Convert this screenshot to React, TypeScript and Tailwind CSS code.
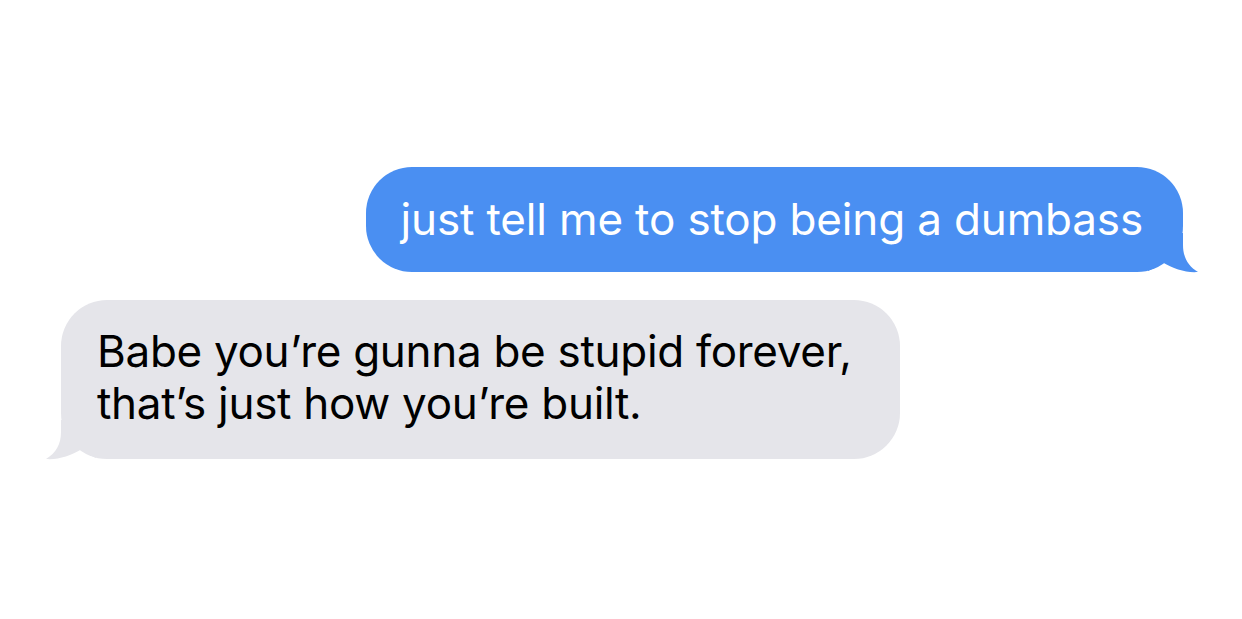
const font = "font-['Inter','Liberation_Sans',sans-serif]";

// iMessage-style tail, drawn for the right side; mirrored for received bubbles
function Tail({ color, flip }: { color: string; flip?: boolean }) {
  return (
    <svg
      width="50"
      height="40"
      viewBox="0 0 50 40"
      className={`absolute bottom-[-1px] ${flip ? "left-[-15px] -scale-x-100" : "right-[-15px]"}`}
    >
      <path
        d="M0 0 H35 V12 C35 24 40 33 50 39 C38 40 26 36 14 29 C9 33 5 36 0 38 Z"
        fill={color}
      />
    </svg>
  );
}

export default function App() {
  return (
    <div className={`flex h-[619px] w-[1242px] flex-col gap-[28px] bg-white pt-[167px] ${font}`}>
      {/* sent */}
      <div className="flex justify-end pr-[59px]">
        <div className="relative rounded-[46px] bg-[#4a8ff2] pt-[26px] pb-[27px] pl-[35px] pr-[40px]">
          <p className="whitespace-nowrap text-[44px] leading-[52px] tracking-[-0.15px] text-white">
            just tell me to stop being a dumbass
          </p>
          <Tail color="#4a8ff2" />
        </div>
      </div>

      {/* received */}
      <div className="flex justify-start pl-[61px]">
        <div className="relative rounded-[46px] bg-[#e5e5ea] pt-[25px] pb-[30px] pl-[36px] pr-[48px]">
          <p className="whitespace-nowrap text-[44px] leading-[52px] tracking-[-0.3px] text-black">
            Babe you’re gunna be stupid forever,
            <br />
            that’s just how you’re built.
          </p>
          <Tail color="#e5e5ea" flip />
        </div>
      </div>
    </div>
  );
}
